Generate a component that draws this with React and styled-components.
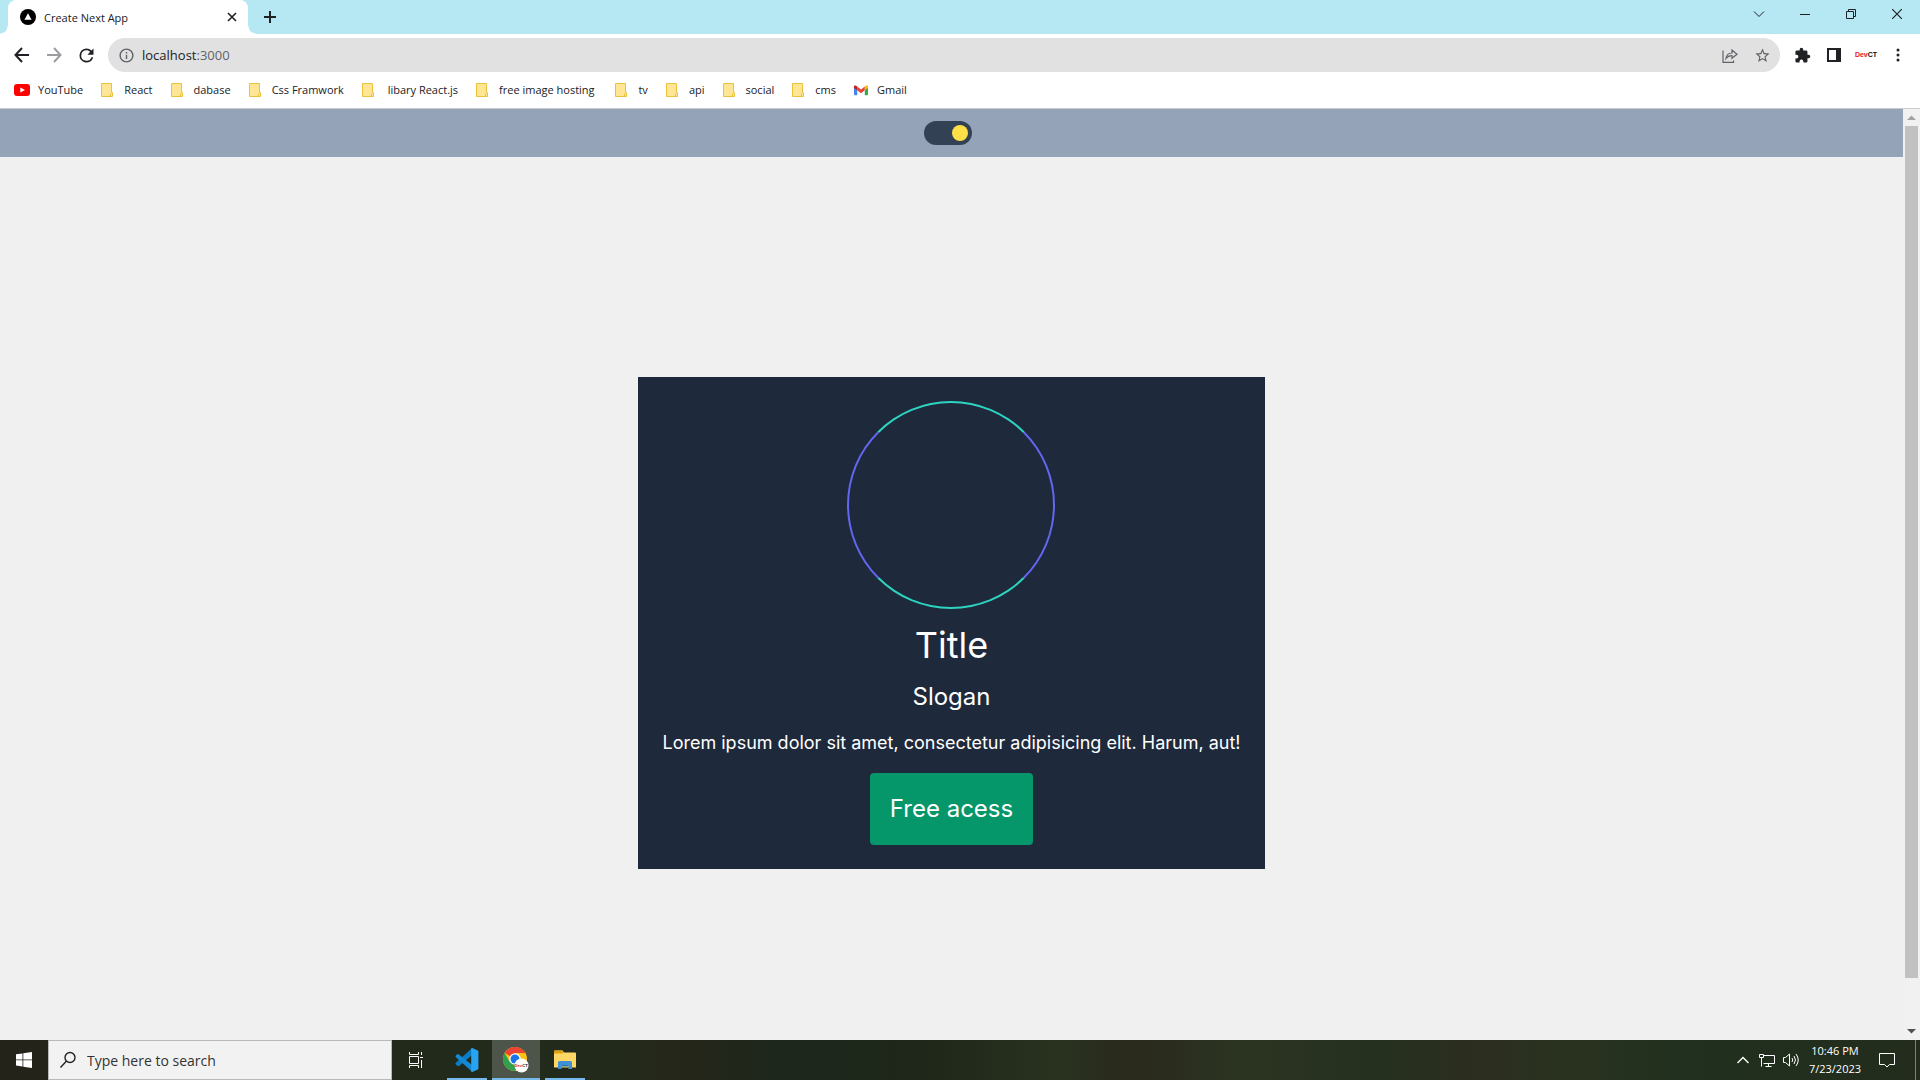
import React, { useState } from "react";
import styled, { createGlobalStyle, css } from "styled-components";

const ui = '"Open Sans", "Noto Sans", sans-serif';

const GlobalStyle = createGlobalStyle`
  *, *::before, *::after { box-sizing: border-box; }
  body { margin: 0; background: #fff; font-family: ${ui}; }
  button, input { font: inherit; }
  svg { display: block; flex: none; }
`;

const Screen = styled.div`
  display: flex;
  flex-direction: column;
  height: 100vh;
  overflow: hidden;
`;

const PlainButton = styled.button`
  display: flex;
  align-items: center;
  justify-content: center;
  flex: none;
  width: ${(p) => p.$w || 32}px;
  height: ${(p) => p.$h || 32}px;
  padding: 0;
  border: 0;
  background: transparent;
  color: ${(p) => p.$color || "#202124"};
`;

/* Tab strip */
const TabStrip = styled.header`
  display: flex;
  flex: none;
  height: 34px;
  padding-left: 8px;
  background: #b5e8f3;
`;

const Tab = styled.div`
  position: relative;
  display: flex;
  align-items: center;
  width: 240px;
  padding: 0 4px 0 12px;
  border-radius: 8px 8px 0 0;
  background: #fff;

  &::before, &::after {
    content: "";
    position: absolute;
    bottom: 0;
    width: 8px;
    height: 8px;
  }
  &::before {
    left: -8px;
    background: radial-gradient(circle at 0 0, transparent 7px, #fff 8px);
  }
  &::after {
    right: -8px;
    background: radial-gradient(circle at 100% 0, transparent 7px, #fff 8px);
  }
`;

const TabTitle = styled.span`
  flex: 1;
  margin-left: 8px;
  color: #202124;
  font-size: 11px;
`;

const NewTab = styled.div`
  display: flex;
  align-items: center;
  margin-left: 6px;
`;

const WindowControls = styled.div`
  display: flex;
  margin-left: auto;
`;

/* Toolbar */
const Toolbar = styled.nav`
  display: flex;
  align-items: center;
  flex: none;
  height: 42px;
  padding: 0 6px;
  background: #fff;
`;

const AddressBar = styled.div`
  display: flex;
  align-items: center;
  flex: 1;
  height: 34px;
  margin: 0 6px;
  padding: 0 2px 0 10px;
  border-radius: 17px;
  background: #e1e1e1;
`;

const UrlText = styled.label`
  position: relative;
  display: flex;
  flex: 1;
  margin-left: 7px;
  color: #5f6368;
  font-size: 13px;
  line-height: 20px;

  b { color: #202124; font-weight: 400; }
`;

const UrlInput = styled.input`
  position: absolute;
  inset: 0;
  width: 100%;
  padding: 0;
  border: 0;
  outline: 0;
  background: transparent;
  color: transparent;
`;

const Extension = styled(PlainButton)`
  font: 700 7px/12px "Liberation Sans Narrow", "Liberation Sans", sans-serif;
  color: #111;
  span { color: #e8121d; }
`;

const Bookmarks = styled.nav`
  display: flex;
  align-items: center;
  flex: none;
  height: 33px;
  padding: 0 14px 5px;
  gap: 17px;
  border-bottom: 1px solid #c9cccd;
  background: #fff;
`;

const Bookmark = styled.a`
  display: flex;
  align-items: center;
  gap: 8px;
  color: #202124;
  font-size: 11px;
  line-height: 16px;
  text-decoration: none;
  white-space: pre;
`;

/* Page */
const Viewport = styled.div`
  display: flex;
  flex: 1;
  min-height: 0;
  background: #f0f0f0;
`;

const Page = styled.div`
  display: flex;
  flex: 1;
  flex-direction: column;
  overflow: hidden;
  font-family: Inter, sans-serif;
`;

const PageHeader = styled.header`
  display: flex;
  justify-content: center;
  flex: none;
  padding: 12px 8px 12px 0;
  background: #94a3b8;
`;

const Toggle = styled.input`
  display: flex;
  align-items: center;
  width: 48px;
  height: 24px;
  margin: 0;
  padding: 4px;
  border-radius: 12px;
  background: #334155;
  appearance: none;

  &::before {
    content: "";
    width: 16px;
    height: 16px;
    border-radius: 50%;
    background: #fde047;
  }
  &:checked { justify-content: flex-end; }
`;

const Main = styled.main`
  display: flex;
  align-items: center;
  justify-content: center;
  flex: 0 0 100%;
`;

const Card = styled.section`
  display: flex;
  flex-direction: column;
  align-items: center;
  gap: 16px;
  padding: 24px;
  background: #1e293b;
  color: #fff;
`;

const Ring = styled.div`
  width: 208px;
  height: 208px;
  border: 2px solid;
  border-color: #2dd4bf #6366f1;
  border-radius: 50%;
`;

const Title = styled.h1`
  margin: 0;
  font-size: 36px;
  font-weight: 400;
  line-height: 40px;
`;

const Slogan = styled.h2`
  margin: 0;
  font-size: 24px;
  font-weight: 400;
  line-height: 32px;
`;

const Copy = styled.p`
  margin: 0;
  font-size: 18px;
  line-height: 28px;
`;

const Cta = styled.button`
  padding: 20px;
  border: 0;
  border-radius: 4px;
  background: #059669;
  color: #fff;
  font-size: 24px;
  line-height: 32px;
`;

const Scrollbar = styled.div`
  display: flex;
  flex-direction: column;
  align-items: center;
  width: 17px;
  background: #f1f1f1;
`;

const Track = styled.div`
  flex: 1;
  width: 13px;
`;

const Thumb = styled.div`
  height: 95%;
  background: #c1c1c1;
`;

/* Taskbar */
const Taskbar = styled.footer`
  display: flex;
  flex: none;
  height: 40px;
  background: linear-gradient(90deg, #24231a 0%, #222b1b 22%, #222b1b 32%, #26261a 35%, #1d271c 41%, #1e2719 48%, #29321f 55%, #2a2a1d 59%, #2b3421 65%, #26301f 72%, #2c2e1f 77%, #29321f 82%, #21301f 88%, #232c1c 100%);
  color: #fff;
`;

const SearchBox = styled.label`
  display: flex;
  align-items: center;
  width: 344px;
  gap: 10px;
  padding-left: 10px;
  border: 1px solid #b8b8b8;
  background: #f2f2f2;
`;

const SearchInput = styled.input`
  flex: 1;
  min-width: 0;
  padding: 0;
  border: 0;
  outline: 0;
  background: transparent;
  font-size: 14px;
  &::placeholder { color: #333; opacity: 1; }
`;

const TaskButton = styled(PlainButton)`
  width: 48px;
  height: 40px;
  color: #fff;
  ${(p) => p.$running && css`
    background: linear-gradient(#76b9ed, #76b9ed) center bottom / ${p.$active ? 48 : 40}px 2px no-repeat ${p.$active ? "#4d554a" : "transparent"};
  `}
`;

const Apps = styled.div`
  display: flex;
  gap: 1px;
  margin-left: 3px;
`;

const Tray = styled.div`
  display: flex;
  align-items: center;
  margin-left: auto;
  padding-right: 8px;
`;

const Clock = styled.time`
  width: 64px;
  font-size: 11px;
  line-height: 18px;
  text-align: center;
  white-space: nowrap;
`;

const ShowDesktop = styled.button`
  width: 5px;
  height: 40px;
  padding: 0;
  border: 0;
  border-left: 1px solid #7b8177;
  background: transparent;
`;

const Glyph = ({ d, size = 24, box = 24, ...rest }) => (
  <svg width={size} height={size} viewBox={`0 0 ${box} ${box}`} fill="currentColor" {...rest}>
    <path d={d} />
  </svg>
);
const Line = ({ d, size = 16, sw = 1, ...rest }) => (
  <svg width={size} height={size} viewBox={`0 0 ${size} ${size}`} fill="none" stroke="currentColor" strokeWidth={sw} {...rest}>
    <path d={d} />
  </svg>
);

const FolderIcon = () => (
  <svg width="16" height="16" viewBox="0 0 16 16">
    <path d="M1.5 1.5h10v9h1v4h-11z" fill="#ffe694" stroke="#e9c23e" />
    <path d="M10.5 11.5v3" stroke="#e9c23e" />
  </svg>
);
const YouTubeIcon = () => (
  <svg width="16" height="16" viewBox="0 0 16 16">
    <rect y="2" width="16" height="12" rx="3" fill="#f00" />
    <path d="M6.3 5.4v5.2L11 8z" fill="#fff" />
  </svg>
);
const GmailIcon = () => (
  <svg width="16" height="16" viewBox="0 0 16 16">
    <path d="M1 4v8.200q0 1 1 1h2.200V7z" fill="#4285f4" />
    <path d="M15 4v8.200q0 1-1 1h-2.200V7z" fill="#34a853" />
    <path d="M4.200 4.500v3.800L8 11.200l3.800-2.900V4.500L8 7.400z" fill="#ea4335" />
    <path d="M1 4.200v1.700l3.200 2.400V4.500l-.8-.6C2.400 3.100 1 3.600 1 4.200z" fill="#c5221f" />
    <path d="M15 4.200v1.700l-3.200 2.400V4.500l.8-.6c1-.8 2.400-.3 2.400.3z" fill="#fbbc04" />
  </svg>
);
const NextIcon = () => (
  <svg width="16" height="16" viewBox="0 0 16 16">
    <circle cx="8" cy="8" r="8" fill="#000" />
    <path d="M8 4.300l3.600 6.400H4.400z" fill="#fff" />
  </svg>
);
const CodeIcon = () => (
  <svg width="24" height="24" viewBox="0 0 24 24">
    <path d="M17.500 6.800L5 17.200 3.400 18.300 2.300 17.700.6 16.200q-.5-.6 0-1.200L17.200 0v6.800z" fill="#0b7dc7" />
    <path d="M.6 7.800L2.300 6.300q.6-.5 1.200 0L17.500 17.200V24L.6 9z" fill="#1289d6" />
    <path d="M17.200 0l5.600 2.600q.6.300.6 1v16.800q0 .7-.6 1L17.200 24q-1 .2-1-1V1q0-1.200 1-1z" fill="#27a3f2" />
  </svg>
);
const ChromeIcon = () => (
  <svg width="26" height="26" viewBox="0 0 26 26">
    <circle cx="12" cy="12" r="12" fill="#fbc116" />
    <path d="M12 12L1.600 6A12 12 0 0 1 22.400 6H12z" fill="#ea4335" />
    <path d="M1.600 6A12 12 0 0 0 12 24l5.200-9L12 12 6.800 15z" fill="#30a04f" />
    <circle cx="12" cy="12" r="5.800" fill="#fff" />
    <circle cx="12" cy="12" r="4.500" fill="#1a73e8" />
    <circle cx="18.500" cy="18.500" r="7" fill="#fff" />
    <text x="11.500" y="20" fontFamily="Liberation Sans, sans-serif" fontSize="4.200" fontWeight="700" fill="#e8121d">Dev<tspan fill="#111">CT</tspan></text>
  </svg>
);
const ExplorerIcon = () => (
  <svg width="22" height="20" viewBox="0 0 22 20">
    <path d="M0 1.500q0-1 1-1h7.500l1.500 2H21q1 0 1 1V17.500H0z" fill="#ffd767" />
    <path d="M0 1.500q0-1 1-1h7.500L9 3.500H0z" fill="#e0a010" />
    <path d="M4 19v-6.500q0-1.500 1.500-1.500h11q1.500 0 1.500 1.500V19h-3.500v-4h-7v4z" fill="#3e91d6" />
    <path d="M7.500 15h7v1.500h-7z" fill="#2873b8" />
  </svg>
);

const bookmarks = ["YouTube", "React", "dabase", "Css Framwork", " libary React.js", "free image hosting ", "tv", "api", "social", "cms", "Gmail"];

export default function App() {
  const [dark, setDark] = useState(true);
  return (
    <Screen>
      <GlobalStyle />
      <TabStrip>
        <Tab>
          <NextIcon />
          <TabTitle>Create Next App</TabTitle>
          <PlainButton $w={24} $h={24} aria-label="Close tab"><Line size={10} sw={1.6} d="M1 1l8 8M9 1L1 9" /></PlainButton>
        </Tab>
        <NewTab>
          <PlainButton aria-label="New tab"><Line size={12} sw={2} d="M6 0v12M0 6h12" /></PlainButton>
        </NewTab>
        <WindowControls>
          <PlainButton $w={46} $h={28} aria-label="Search tabs"><Line size={12} d="M1 3.500l5 5 5-5" /></PlainButton>
          <PlainButton $w={46} $h={28} aria-label="Minimize"><Line size={10} d="M0 5.500h10" /></PlainButton>
          <PlainButton $w={46} $h={28} aria-label="Restore"><Line size={10} d="M.5 2.500h7v7h-7zM2.500 2.500v-2h7v7h-2" /></PlainButton>
          <PlainButton $w={46} $h={28} aria-label="Close"><Line size={10} sw={1.2} d="M0 0l10 10M10 0L0 10" /></PlainButton>
        </WindowControls>
      </TabStrip>

      <Toolbar>
        <PlainButton aria-label="Back"><Line sw={2} d="M15 8H2M8 1L1.500 8 8 15" /></PlainButton>
        <PlainButton aria-label="Forward" $color="#9b9da0"><Line sw={2} d="M1 8h13M8 1l6.500 7L8 15" /></PlainButton>
        <PlainButton aria-label="Reload"><Glyph size={21} d="M17.650 6.350A7.958 7.958 0 0 0 12 4a8 8 0 1 0 7.730 10h-2.080A6 6 0 1 1 12 6c1.660 0 3.140.69 4.220 1.780L13 11h7V4l-2.350 2.350z" /></PlainButton>
        <AddressBar>
          <Glyph size={17} color="#5f6368" d="M11 7h2v2h-2zm0 4h2v6h-2zm1-9a10 10 0 1 0 0 20 10 10 0 0 0 0-20zm0 18a8 8 0 1 1 0-16 8 8 0 0 1 0 16z" />
          <UrlText>
            <b>localhost</b>:3000
            <UrlInput aria-label="Address and search bar" />
          </UrlText>
          <PlainButton aria-label="Share" $color="#5f6368"><Line sw={1.200} d="M1 3.500v11.900h10.500v-2M4 11.500C4.500 7.500 7 6 10 6V3l5 4.200-5 4.100V8.700C7.500 8.500 5.500 9.500 4 11.500z" /></PlainButton>
          <PlainButton aria-label="Bookmark this tab" $color="#5f6368"><Glyph size={17} d="M22 9.240l-7.190-.62L12 2 9.190 8.630 2 9.240l5.460 4.730L5.820 21 12 17.270 18.180 21l-1.630-7.030L22 9.240zM12 15.400l-3.760 2.270 1-4.280-3.320-2.880 4.380-.38L12 6.100l1.710 4.040 4.380.38-3.320 2.880 1 4.280L12 15.400z" /></PlainButton>
        </AddressBar>
        <PlainButton aria-label="Extensions"><Glyph size={17} d="M20.500 11H19V7a2 2 0 0 0-2-2h-4V3.500a2.500 2.500 0 0 0-5 0V5H4a2 2 0 0 0-2 2v3.800h1.500a2.700 2.700 0 0 1 0 5.400H2V20a2 2 0 0 0 2 2h3.800v-1.500a2.700 2.700 0 0 1 5.400 0V22H17a2 2 0 0 0 2-2v-4h1.500a2.500 2.500 0 0 0 0-5z" /></PlainButton>
        <PlainButton aria-label="Side panel"><Glyph size={14} box={14} fillRule="evenodd" d="M0 0h14v14H0zM2 2v10h7V2z" /></PlainButton>
        <Extension aria-label="DevCT"><span>Dev</span>CT</Extension>
        <PlainButton aria-label="Menu"><Glyph size={16} box={16} d="M8 1.500a1.500 1.500 0 1 1 0 3 1.500 1.500 0 0 1 0-3zm0 5a1.500 1.500 0 1 1 0 3 1.500 1.500 0 0 1 0-3zm0 5a1.500 1.500 0 1 1 0 3 1.500 1.500 0 0 1 0-3z" /></PlainButton>
      </Toolbar>

      <Bookmarks>
        {bookmarks.map((name) => {
          const folder = name !== "YouTube" && name !== "Gmail";
          return (
            <Bookmark key={name} href="#">
              {folder ? <FolderIcon /> : name === "Gmail" ? <GmailIcon /> : <YouTubeIcon />}
              <span>{name}</span>
            </Bookmark>
          );
        })}
      </Bookmarks>

      <Viewport>
        <Page>
          <PageHeader>
            <Toggle type="checkbox" role="switch" aria-label="Dark mode" checked={dark} onChange={() => setDark(!dark)} />
          </PageHeader>
          <Main>
            <Card>
              <Ring />
              <Title>Title</Title>
              <Slogan>Slogan</Slogan>
              <Copy>Lorem ipsum dolor sit amet, consectetur adipisicing elit. Harum, aut!</Copy>
              <Cta>Free acess</Cta>
            </Card>
          </Main>
        </Page>
        <Scrollbar>
          <PlainButton $w={17} $h={17} $color="#a3a3a3" aria-label="Scroll up"><Glyph size={9} box={7} d="M0 5.500L3.500 2 7 5.500z" /></PlainButton>
          <Track><Thumb /></Track>
          <PlainButton $w={17} $h={17} $color="#505050" aria-label="Scroll down"><Glyph size={9} box={7} d="M0 1.500L3.500 5 7 1.500z" /></PlainButton>
        </Scrollbar>
      </Viewport>

      <Taskbar>
        <TaskButton aria-label="Start"><Glyph size={16} box={16} d="M0 2.300L6.500 1.400v6.100H0zM7.300 1.300L16 0v7.500H7.300zM0 8.300h6.500v6.200L0 13.600zM7.300 8.300H16V16l-8.700-1.200z" /></TaskButton>
        <SearchBox>
          <Line size={18} sw={1.400} color="#222" d="M11 1.500a5 5 0 1 1 0 10 5 5 0 0 1 0-10zM7.500 10L1.500 16.500" />
          <SearchInput placeholder="Type here to search" />
        </SearchBox>
        <TaskButton aria-label="Task view"><Line size={16} d="M1.500 0v2.500h9V0M1.500 16v-2.500h9V16M1.500 4.500h9v7h-9zM13.500 0v3M13.500 8v8M12 5.500h3" /></TaskButton>
        <Apps>
          <TaskButton $running aria-label="Visual Studio Code"><CodeIcon /></TaskButton>
          <TaskButton $running $active aria-label="Google Chrome"><ChromeIcon /></TaskButton>
          <TaskButton $running aria-label="File Explorer"><ExplorerIcon /></TaskButton>
        </Apps>
        <Tray>
          <PlainButton $w={24} $color="#fff" aria-label="Show hidden icons"><Line size={12} sw={1.400} d="M.5 9L6 3.500 11.500 9" /></PlainButton>
          <PlainButton $w={24} $color="#fff" aria-label="Network"><Line size={16} d="M5 3.500h10.500v8H4.500M9.500 11.500v3M6.500 14.500h6M.5 2.500h4v3h-4zM2.500 5.500v9" /></PlainButton>
          <PlainButton $w={24} $color="#fff" aria-label="Volume"><Line size={16} d="M.5 5.500h2L6.500 2v12l-4-3.500h-2zM9 6q1.500 2 0 4M11 4q3 4 0 8M13 2q4.500 6 0 12" /></PlainButton>
          <Clock>10:46 PM<br />7/23/2023</Clock>
          <PlainButton $w={40} $color="#fff" aria-label="Notifications"><Line size={16} d="M.5 1.500h15v11h-5L8 15l-2.500-2.500h-5z" /></PlainButton>
        </Tray>
        <ShowDesktop aria-label="Show desktop" />
      </Taskbar>
    </Screen>
  );
}
